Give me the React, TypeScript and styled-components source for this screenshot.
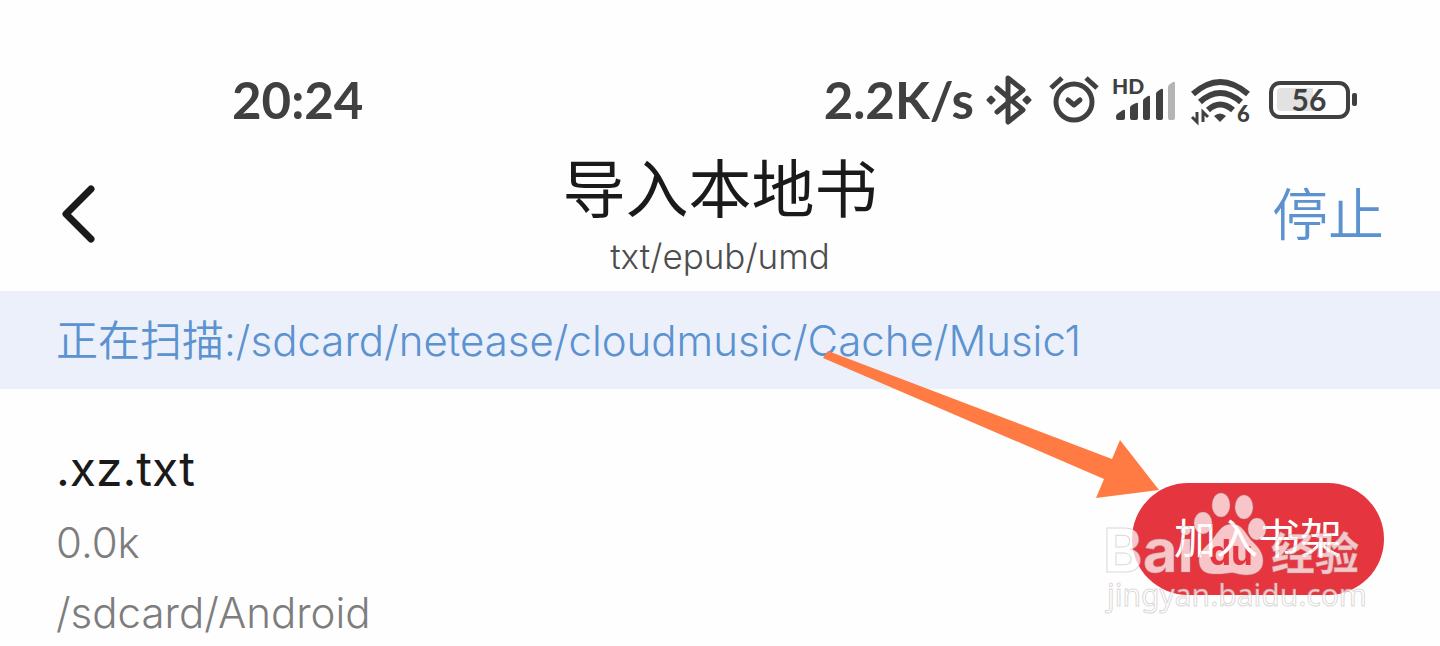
import React from "react";
import styled, { createGlobalStyle } from "styled-components";

const GlobalStyle = createGlobalStyle`
  * { box-sizing: border-box; }
  body {
    margin: 0;
    background: #fefefe;
    color: #1a1a1a;
    font-family: Inter, "Noto Sans CJK SC", sans-serif;
    font-weight: 350;
  }
  button { border: 0; padding: 0; background: none; font: inherit; cursor: pointer; }
  h1, h2, p { margin: 0; font-weight: inherit; }
  svg { display: block; overflow: visible; }
`;

const Screen = styled.main`
  width: 100%;
  overflow: hidden;
`;

const StatusBar = styled.div`
  display: flex;
  align-items: center;
  justify-content: space-between;
  padding: 72px 83px 0 232px;
  height: 128px;
  color: #404040;
  font-family: Lato, sans-serif;
  font-weight: 700;
`;

const StatusText = styled.span`
  font-size: 51px;
  line-height: 56px;
`;

const StatusGroup = styled.div`
  display: flex;
  align-items: center;
`;

const StatusIcon = styled.svg<{ $gap: number }>`
  margin-left: ${(p) => p.$gap}px;
  flex: none;
`;

const Header = styled.header`
  display: grid;
  grid-template-columns: 1fr auto 1fr;
  align-items: center;
  height: 163px;
  padding: 0 56px;
`;

const BackButton = styled.button`
  justify-self: start;
  padding: 8px 4px 0;
`;

const Heading = styled.div`
  padding-top: 12px;
  text-align: center;
`;

const Title = styled.h1`
  font-size: 63px;
  line-height: 72px;
  font-weight: 400;
`;

const Formats = styled.p`
  margin-top: 9px;
  font-size: 35px;
  line-height: 44px;
  color: #4d4d4d;
`;

const StopButton = styled.button`
  justify-self: end;
  padding-top: 10px;
  color: #5b92cf;
  font-size: 56px;
  line-height: 72px;
`;

const ScanBanner = styled.p`
  padding: 22px 56px 20px;
  background: #ebf0fb;
  color: #5b92cf;
  font-size: 42px;
  line-height: 56px;
  white-space: nowrap;
`;

const BookRow = styled.section`
  display: flex;
  align-items: center;
  justify-content: space-between;
  padding: 48px 56px 0;
`;

const BookName = styled.h2`
  font-size: 48px;
  line-height: 64px;
  font-weight: 400;
`;

const BookMeta = styled.p`
  margin-top: 14px;
  font-size: 42px;
  line-height: 56px;
  color: #7d7d7d;
`;

const Action = styled.div`
  position: relative;
`;

const AddButton = styled.button`
  width: 252px;
  height: 112px;
  border-radius: 56px;
  background: #e5353f;
  color: #fff;
  font-size: 42px;
  line-height: 56px;
  font-weight: 400;
`;

const Arrow = styled.svg`
  position: absolute;
  right: 224px;
  bottom: 96px;
  pointer-events: none;
`;

const Watermark = styled.svg`
  position: absolute;
  left: -36px;
  top: 0;
  pointer-events: none;
`;

function BluetoothIcon() {
  return (
    <StatusIcon $gap={12} width="46" height="50" viewBox="0 0 46 50" fill="none" stroke="currentColor" strokeWidth="4" strokeLinejoin="round" strokeLinecap="round" aria-label="蓝牙">
      <path d="M11 13 37 35 22 47V3L37 15 11 37" strokeWidth="5" />
      <path d="M5 22 8 25 5 28 2 25ZM41 22 44 25 41 28 38 25Z" fill="currentColor" strokeWidth="3" />
    </StatusIcon>
  );
}

function AlarmIcon() {
  return (
    <StatusIcon $gap={17} width="50" height="50" viewBox="0 0 50 50" fill="none" stroke="currentColor" strokeLinecap="round" strokeLinejoin="round" aria-label="闹钟">
      <circle cx="25" cy="27" r="18" strokeWidth="5" />
      <path d="M19 25 25 30 31 25" strokeWidth="5" />
      <path d="M2 13 13 3M37 3 48 13" strokeWidth="5" strokeLinecap="butt" />
    </StatusIcon>
  );
}

function SignalIcon() {
  return (
    <StatusIcon $gap={13} width="64" height="48" viewBox="0 0 64 48" fill="currentColor" aria-label="信号">
      <text x="0" y="18" fontSize="21" fontWeight="900">HD</text>
      <path d="M5 38 11 34Q13 33 13 35V42Q13 44 11 44H6Q4 44 4 42V40ZM18 32Q18 30 20 29L24 27Q26 26 26 28V42Q26 44 24 44H20Q18 44 18 42ZM31 25Q31 23 33 22L36 20Q38 19 38 21V42Q38 44 36 44H33Q31 44 31 42ZM44 18Q44 16 46 15L49 13Q51 12 51 14V42Q51 44 49 44H46Q44 44 44 42Z" />
      <path d="M56 11Q56 9 58 8L61 6Q63 5 63 7V42Q63 44 61 44H58Q56 44 56 42Z" fill="#b5b5b5" />
    </StatusIcon>
  );
}

function WifiIcon() {
  return (
    <StatusIcon $gap={14} width="62" height="50" viewBox="0 0 62 50" fill="none" stroke="currentColor" aria-label="无线网络">
      <path d="M3 19Q30-5 58 19" strokeWidth="6" />
      <path d="M10 27Q30 9 51 27" strokeWidth="6" />
      <path d="M18 35Q30 24 43 35" strokeWidth="6" />
      <path d="M24 41Q30 36 36 41L30 47Z" fill="currentColor" stroke="none" />
      <path d="M7 37V47L2 42M13 47V37L18 42" strokeWidth="3" />
      <text x="47" y="47" fontSize="22" fontWeight="900" fill="currentColor" stroke="none">6</text>
    </StatusIcon>
  );
}

function BatteryIcon() {
  return (
    <StatusIcon $gap={17} width="88" height="40" viewBox="0 0 88 40" fill="none" aria-label="电量 56%">
      <rect x="2" y="3" width="77" height="34" rx="9" stroke="currentColor" strokeWidth="4" />
      <path d="M12 8H44V31H12Q8 31 8 27V12Q8 8 12 8Z" fill="#e2e2e2" />
      <rect x="83" y="13" width="5" height="13" rx="2" fill="currentColor" />
      <text x="40" y="31" textAnchor="middle" fontSize="30" fontWeight="700" fill="currentColor">56</text>
    </StatusIcon>
  );
}

function BaiduWatermark() {
  return (
    <Watermark width="280" height="140" viewBox="0 0 280 140" aria-hidden="true">
      <mask id="paw-letters">
        <rect width="280" height="140" fill="#fff" />
        <text x="113" y="82" fontSize="35" fontWeight="700" fill="#000">du</text>
      </mask>
      <g fill="#fff" fillOpacity="0.72" stroke="#a89c9c" strokeOpacity="0.4" strokeWidth="1">
        <text x="7" y="89" fontSize="60" fontWeight="700">Bai</text>
        <ellipse cx="107" cy="40" rx="9" ry="11" />
        <ellipse cx="125" cy="22" rx="9" ry="12" />
        <ellipse cx="148" cy="24" rx="9" ry="12" />
        <ellipse cx="161" cy="46" rx="9" ry="11" />
        <path mask="url(#paw-letters)" d="M136 41C146 41 149 50 155 57C162 64 167 69 167 78C167 88 159 92 150 92C142 92 139 89 133 90C127 91 124 91 118 91C108 91 103 86 103 77C103 68 110 64 116 57C122 50 125 41 136 41Z" />
        <text x="175" y="87" fontSize="44" fontWeight="700">经验</text>
        <text x="11" y="123" fontFamily="Noto Sans, sans-serif" fontSize="30" fontWeight="400">jingyan.baidu.com</text>
      </g>
    </Watermark>
  );
}

export default function App() {
  return (
    <>
      <GlobalStyle />
      <Screen>
        <StatusBar>
          <StatusText as="time">20:24</StatusText>
          <StatusGroup>
            <StatusText>2.2K/s</StatusText>
            <BluetoothIcon />
            <AlarmIcon />
            <SignalIcon />
            <WifiIcon />
            <BatteryIcon />
          </StatusGroup>
        </StatusBar>
        <Header>
          <BackButton aria-label="返回">
            <svg width="38" height="60" viewBox="0 0 38 60" fill="none" stroke="#1a1a1a" strokeWidth="7" strokeLinecap="round" strokeLinejoin="round">
              <path d="M31 5 6 30 31 55" />
            </svg>
          </BackButton>
          <Heading>
            <Title>导入本地书</Title>
            <Formats>txt/epub/umd</Formats>
          </Heading>
          <StopButton>停止</StopButton>
        </Header>
        <ScanBanner>正在扫描:/sdcard/netease/cloudmusic/Cache/Music1</ScanBanner>
        <BookRow>
          <div>
            <BookName>.xz.txt</BookName>
            <BookMeta>0.0k</BookMeta>
            <BookMeta>/sdcard/Android</BookMeta>
          </div>
          <Action>
            <AddButton>加入书架</AddButton>
            <Arrow width="338" height="150" viewBox="0 0 338 150" fill="#ff7b43" aria-hidden="true">
              <path d="M6 2 290 110 298 91 337 141 274 149 282 130 1 9Z" />
            </Arrow>
            <BaiduWatermark />
          </Action>
        </BookRow>
      </Screen>
    </>
  );
}
